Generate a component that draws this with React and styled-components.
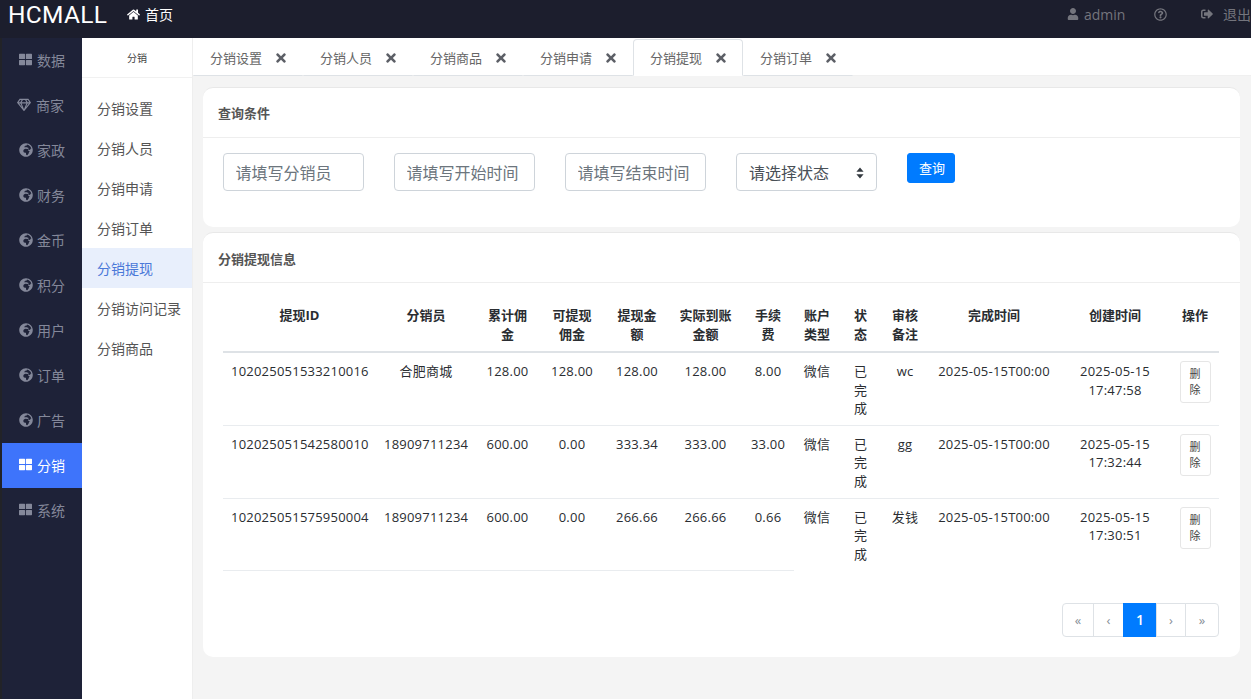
import React from 'react';
import styled, { createGlobalStyle } from 'styled-components';
import {
  FaThLarge,
  FaRegGem,
  FaGlobeAfrica,
  FaHome,
  FaUser,
  FaRegQuestionCircle,
  FaSignOutAlt,
  FaTimes,
} from 'react-icons/fa';

const sideItems = [
  { label: '数据', icon: FaThLarge, size: 13 },
  { label: '商家', icon: FaRegGem, size: 14, left: -2, right: 0 },
  { label: '家政', icon: FaGlobeAfrica, size: 14, right: -1 },
  { label: '财务', icon: FaGlobeAfrica, size: 14, right: -1 },
  { label: '金币', icon: FaGlobeAfrica, size: 14, right: -1 },
  { label: '积分', icon: FaGlobeAfrica, size: 14, right: -1 },
  { label: '用户', icon: FaGlobeAfrica, size: 14, right: -1 },
  { label: '订单', icon: FaGlobeAfrica, size: 14, right: -1 },
  { label: '广告', icon: FaGlobeAfrica, size: 14, right: -1 },
  { label: '分销', icon: FaThLarge, size: 13, active: true },
  { label: '系统', icon: FaThLarge, size: 13 },
];

const subItems = ['分销设置', '分销人员', '分销申请', '分销订单', '分销提现', '分销访问记录', '分销商品'];
const tabs = ['分销设置', '分销人员', '分销商品', '分销申请', '分销提现', '分销订单'];
const columnWidths = [153, 100, 63, 66, 64, 73, 52, 46, 41, 48, 130, 112, 48];
const heads = ['提现ID', '分销员', '累计佣金', '可提现佣金', '提现金额', '实际到账金额', '手续费', '账户类型', '状态', '审核备注', '完成时间', '创建时间', '操作'];

const rows = [
  ['102025051533210016', '合肥商城', '128.00', '128.00', '128.00', '128.00', '8.00', '微信', '已完成', 'wc', '2025-05-15T00:00', '2025-05-15 17:47:58'],
  ['102025051542580010', '18909711234', '600.00', '0.00', '333.34', '333.00', '33.00', '微信', '已完成', 'gg', '2025-05-15T00:00', '2025-05-15 17:32:44'],
  ['102025051575950004', '18909711234', '600.00', '0.00', '266.66', '266.66', '0.66', '微信', '已完成', '发钱', '2025-05-15T00:00', '2025-05-15 17:30:51'],
];

const pages = [
  { label: '«', width: 32 },
  { label: '‹', width: 31 },
  { label: '1', width: 34, active: true },
  { label: '›', width: 30 },
  { label: '»', width: 34 },
];

const App = () => {
  return (
    <>
      <GlobalStyle />
      <Page>
        <TopBar>
          <Brand>HCMALL</Brand>
          <HomeLink>
            <FaHome size={13} />
            首页
          </HomeLink>
          <TopRight>
            <UserLink>
              <FaUser size={12} />
              admin
            </UserLink>
            <HelpLink>
              <FaRegQuestionCircle size={13} />
            </HelpLink>
            <LogoutLink>
              <FaSignOutAlt size={12} />
              <span>退出</span>
            </LogoutLink>
          </TopRight>
        </TopBar>
        <Body>
          <Sidebar>
            {sideItems.map((item) => (
              <SideItem key={item.label} $active={item.active} $left={item.left} $right={item.right}>
                <item.icon size={item.size} />
                {item.label}
              </SideItem>
            ))}
          </Sidebar>
          <SubNav>
            <SubTitle>分销</SubTitle>
            <SubList>
              {subItems.map((item) => (
                <SubItem key={item} $active={item === '分销提现'}>
                  {item}
                </SubItem>
              ))}
            </SubList>
          </SubNav>
          <Main>
            <TabBar>
              {tabs.map((tab) => (
                <Tab key={tab} $active={tab === '分销提现'}>
                  {tab}
                  <FaTimes size={14} />
                </Tab>
              ))}
            </TabBar>
            <Content>
              <Card>
                <CardHeader>查询条件</CardHeader>
                <FilterForm>
                  <TextInput placeholder="请填写分销员" />
                  <TextInput placeholder="请填写开始时间" />
                  <TextInput placeholder="请填写结束时间" />
                  <SelectWrap>
                    <StatusSelect defaultValue="">
                      <option value="">请选择状态</option>
                    </StatusSelect>
                    <SelectArrows width="8" height="12" viewBox="0 0 8 12">
                      <path d="M4 0.5 L7.6 4.8 H0.4 Z M4 11.5 L7.6 7.2 H0.4 Z" fill="#343a40" />
                    </SelectArrows>
                  </SelectWrap>
                  <SearchButton type="button">查询</SearchButton>
                </FilterForm>
              </Card>
              <TableCard>
                <TableCardHeader>分销提现信息</TableCardHeader>
                <TableWrap>
                  <DataTable>
                    <colgroup>
                      {columnWidths.map((width, i) => (
                        <col key={i} width={width} />
                      ))}
                    </colgroup>
                    <thead>
                      <tr>
                        {heads.map((head) => (
                          <HeadCell key={head}>{head}</HeadCell>
                        ))}
                      </tr>
                    </thead>
                    <tbody>
                      {rows.map((row, rowIndex) => {
                        const isLast = rowIndex === rows.length - 1;
                        return (
                          <tr key={row[0]}>
                            {row.map((value, i) => (
                              <Cell key={i} $last={isLast} $closing={isLast && i < 7}>
                                {value}
                              </Cell>
                            ))}
                            <ActionCell $last={isLast}>
                              <DeleteButton type="button">删除</DeleteButton>
                            </ActionCell>
                          </tr>
                        );
                      })}
                    </tbody>
                  </DataTable>
                </TableWrap>
                <Pagination>
                  {pages.map((page) => (
                    <PageItem key={page.label} $active={page.active} $width={page.width}>
                      {page.label}
                    </PageItem>
                  ))}
                </Pagination>
              </TableCard>
            </Content>
          </Main>
        </Body>
      </Page>
    </>
  );
};

export default App;

const GlobalStyle = createGlobalStyle`
  html, body {
    margin: 0;
    padding: 0;
    overflow: hidden;
    background: #f4f4f4;
  }
  * {
    box-sizing: border-box;
  }
  body, input, select, button {
    font-family: "Open Sans", "Noto Sans CJK SC", sans-serif;
  }
`;

const Page = styled.div`
  display: flex;
  flex-direction: column;
  width: 1251px;
  height: 699px;
  overflow: hidden;
`;

const TopBar = styled.header`
  display: flex;
  align-items: center;
  flex: 0 0 38px;
  height: 38px;
  padding: 0 0 10px 8px;
  background: #1c1e2d;
  overflow: hidden;
`;

const Brand = styled.div`
  align-self: flex-start;
  width: 119px;
  height: 29px;
  color: #fff;
  font-family: Roboto, sans-serif;
  font-size: 24.5px;
  letter-spacing: 0.3px;
  line-height: 29px;
`;

const HomeLink = styled.div`
  display: flex;
  align-items: center;
  gap: 5px;
  color: #fff;
  font-size: 14px;
`;

const TopRight = styled.div`
  display: flex;
  align-items: center;
  margin-left: auto;
  color: #74757d;
  font-size: 14px;
`;

const UserLink = styled.div`
  display: flex;
  align-items: center;
  gap: 5px;
  width: 87px;
`;

const HelpLink = styled.div`
  display: flex;
  width: 47px;
`;

const LogoutLink = styled.div`
  display: flex;
  align-items: center;
  gap: 10px;
  width: 50px;
  white-space: nowrap;
`;

const Body = styled.div`
  display: flex;
  flex: 1;
  min-height: 0;
`;

const Sidebar = styled.nav`
  flex: 0 0 82px;
  border-left: 2px solid #222328;
  background: #1e2238;
`;

const SideItem = styled.div`
  display: flex;
  align-items: center;
  gap: 5px;
  height: 45px;
  padding: 0 0 2px 17px;
  background: ${({ $active }) => ($active ? '#3e74fb' : 'transparent')};
  color: ${({ $active }) => ($active ? '#fff' : '#84889a')};
  font-size: 14px;

  svg {
    margin-left: ${({ $left }) => $left || 0}px;
    margin-right: ${({ $right }) => $right || 0}px;
  }
`;

const SubNav = styled.aside`
  flex: 0 0 111px;
  border-right: 1px solid #eee;
  background: #fff;
`;

const SubTitle = styled.div`
  height: 40px;
  border-bottom: 1px solid #f1f1f1;
  color: #444;
  font-size: 10px;
  line-height: 40px;
  text-align: center;
`;

const SubList = styled.div`
  padding-top: 10px;
`;

const SubItem = styled.div`
  height: 40px;
  padding-left: 15px;
  background: ${({ $active }) => ($active ? '#e8effc' : 'transparent')};
  color: ${({ $active }) => ($active ? '#4a78d8' : '#555')};
  font-size: 14px;
  line-height: 41px;
  white-space: nowrap;
`;

const Main = styled.main`
  display: flex;
  flex: 1;
  flex-direction: column;
  min-width: 0;
`;

const TabBar = styled.div`
  display: flex;
  flex: 0 0 38px;
  height: 38px;
  min-height: 0;
  padding-top: 1px;
  border-bottom: 1px solid #f0f0f0;
  background: #fff;
`;

const Tab = styled.div`
  display: flex;
  flex: 0 0 110px;
  align-items: center;
  justify-content: space-between;
  height: 37px;
  margin-bottom: -1px;
  padding: 0 16px;
  border: 1px solid ${({ $active }) => ($active ? '#dee2e6' : 'transparent')};
  border-bottom: 1px solid ${({ $active }) => ($active ? '#fff' : '#dee2e6')};
  border-radius: 4px 4px 0 0;
  color: #666;
  font-size: 13px;
  white-space: nowrap;

  svg {
    margin-right: -2px;
    color: #5c5f66;
  }
`;

const Content = styled.div`
  display: flex;
  flex: 1;
  flex-direction: column;
  gap: 5px;
  padding: 11px 11px 0 10px;
  background: #f4f4f4;
`;

const Card = styled.section`
  height: 140px;
  border-top: 1px solid #e8e8e8;
  border-radius: 10px;
  background: #fff;
`;

const TableCard = styled(Card)`
  height: 425px;
`;

const CardHeader = styled.div`
  height: 50px;
  padding-left: 15px;
  border-bottom: 1px solid #eee;
  color: #555;
  font-size: 13px;
  font-weight: 700;
  line-height: 50px;
`;

const TableCardHeader = styled(CardHeader)`
  line-height: 52px;
`;

const FilterForm = styled.form`
  display: flex;
  align-items: flex-start;
  gap: 30px;
  padding: 15px 20px;
`;

const TextInput = styled.input`
  width: 141px;
  height: 38px;
  padding: 1px 12px 0 11.5px;
  border: 1px solid #ced4da;
  border-radius: 4px;
  background: #fff;
  font-size: 16px;

  &::placeholder {
    color: #6c757d;
    opacity: 1;
  }
`;

const SelectWrap = styled.div`
  position: relative;
  width: 141px;
  height: 38px;
`;

const StatusSelect = styled.select`
  width: 100%;
  height: 100%;
  padding: 1px 12px 0;
  border: 1px solid #ced4da;
  border-radius: 4px;
  background: #fff;
  color: #495057;
  font-size: 16px;
  appearance: none;
`;

const SelectArrows = styled.svg`
  position: absolute;
  top: 14px;
  right: 13px;
`;

const SearchButton = styled.button`
  width: 48px;
  height: 30px;
  padding: 0 0 1px 2px;
  border: 1px solid #007bff;
  border-radius: 3px;
  background: #007bff;
  color: #fff;
  font-size: 13px;
`;

const TableWrap = styled.div`
  padding: 15px 21px 0 20px;
`;

const DataTable = styled.table`
  width: 996px;
  border-collapse: collapse;
  table-layout: fixed;
  color: #2a2d31;
  line-height: 18.5px;
`;

const HeadCell = styled.th`
  padding: 8px;
  border-bottom: 2px solid #dee2e6;
  font-size: 13px;
  font-weight: 700;
  text-align: center;
  vertical-align: top;
`;

const Cell = styled.td`
  height: ${({ $last }) => ($last ? 72 : 73)}px;
  padding: 9px 8px 6px;
  border-top: 1px solid #e9ecef;
  border-bottom: ${({ $closing }) => ($closing ? '1px solid #e9ecef' : '0')};
  font-size: 13px;
  letter-spacing: 0.22px;
  text-align: center;
  vertical-align: top;

  tr:first-child > & {
    border-top: 0;
  }
`;

const ActionCell = styled(Cell)`
  padding: 8px 8px 6px;
`;

const DeleteButton = styled.button`
  display: block;
  width: 31px;
  margin: 0 auto;
  padding: 4px 8px;
  border: 1px solid #e6e6e6;
  border-radius: 3px;
  background: #fff;
  color: #444;
  font-size: 11px;
  line-height: 16px;
`;

const Pagination = styled.div`
  display: flex;
  justify-content: flex-end;
  margin: 32px 21px 0 0;
`;

const PageItem = styled.div`
  display: flex;
  align-items: center;
  justify-content: center;
  width: ${({ $width }) => $width}px;
  height: 34px;
  margin-left: -1px;
  border: 1px solid ${({ $active }) => ($active ? '#007bff' : '#dee2e6')};
  background: ${({ $active }) => ($active ? '#007bff' : '#fff')};
  color: ${({ $active }) => ($active ? '#fff' : '#868e96')};
  font-size: ${({ $active }) => ($active ? '14px' : '13px')};
  font-weight: ${({ $active }) => ($active ? 600 : 400)};

  &:first-child {
    border-radius: 4px 0 0 4px;
  }
  &:last-child {
    border-radius: 0 4px 4px 0;
  }
`;
